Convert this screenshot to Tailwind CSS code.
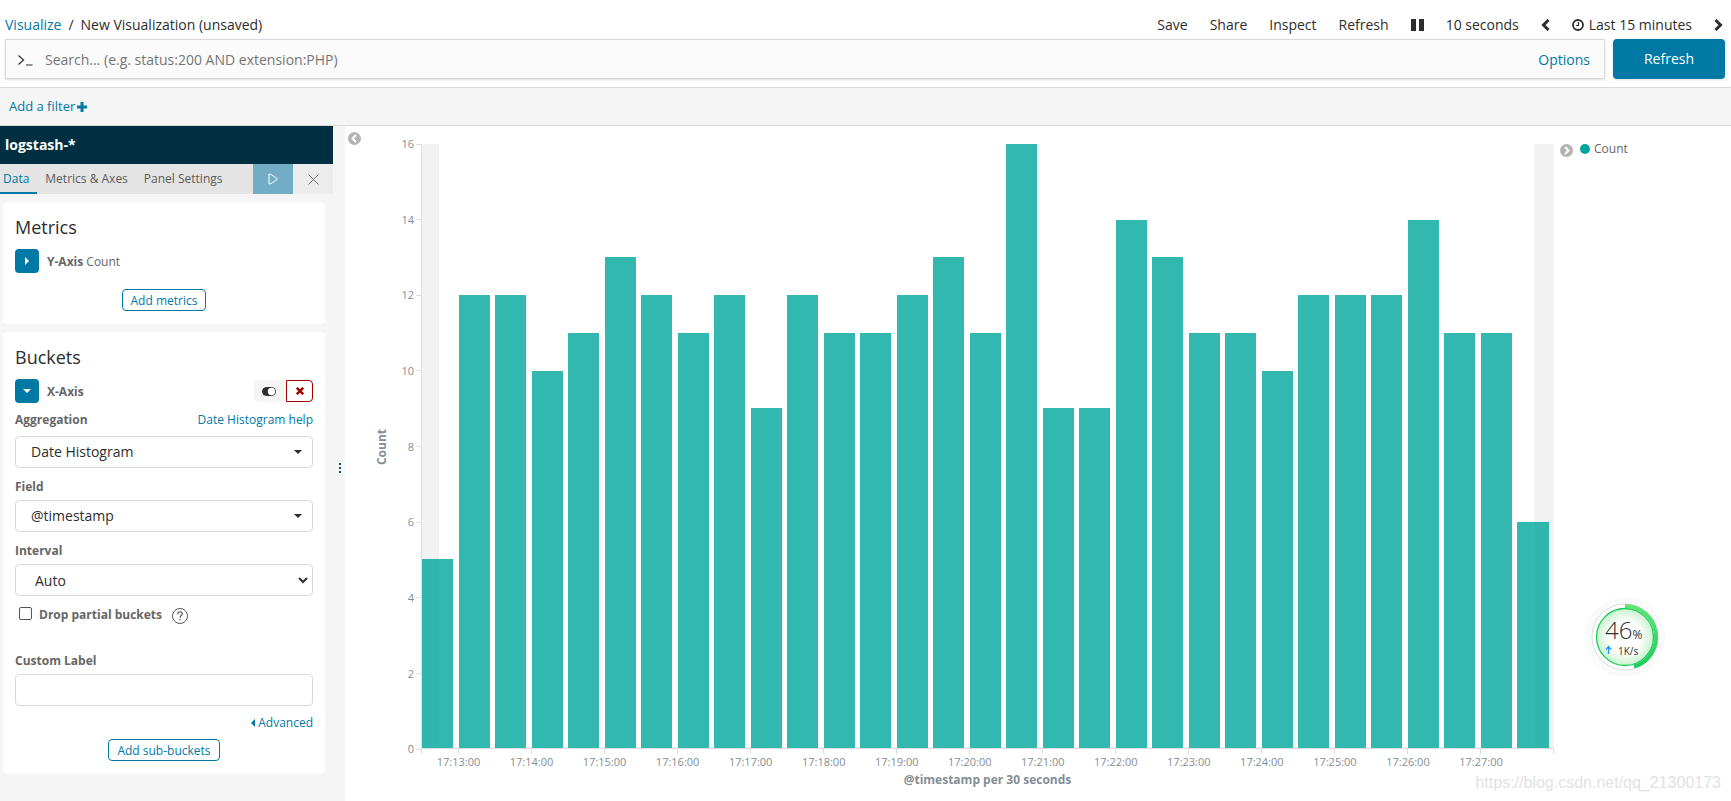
<!DOCTYPE html>
<html lang="en">
<head>
<meta charset="utf-8">
<title>New Visualization - Kibana</title>
<script src="https://cdn.jsdelivr.net/npm/@tailwindcss/browser@4"></script>
</head>
<body class="min-h-screen flex flex-col bg-white text-[#2d2d2d] text-sm font-['Open_Sans','Noto_Sans',sans-serif] relative">

<header class="pt-[11px] pb-2">
  <div class="flex items-center justify-between h-7 pl-[5px] pr-2">
    <nav aria-label="Breadcrumb" class="flex gap-[7px]">
      <a href="#" class="text-[#0079a5]">Visualize</a><span>/</span><span>New Visualization (unsaved)</span>
    </nav>
    <nav aria-label="Actions" class="flex items-center gap-[22px]">
      <button>Save</button>
      <button>Share</button>
      <button>Inspect</button>
      <button>Refresh</button>
      <button aria-label="Pause"><svg class="block w-[13px] h-3" viewBox="0 0 13 12" fill="currentColor"><path d="M0 0h5v12H0zM8 0h5v12H8z"/></svg></button>
      <button>10 seconds</button>
      <button aria-label="Previous"><svg class="block w-[9px] h-3" viewBox="0 0 9 12" fill="none" stroke="currentColor" stroke-width="3"><path d="M7.500 1 2.500 6l5 5"/></svg></button>
      <button class="flex items-center gap-[5px]"><svg class="w-3 h-3" viewBox="0 0 12 12" fill="none" stroke="currentColor"><circle cx="6" cy="6" r="5" stroke-width="1.800"/><path d="M6.500 3v3.500H4" stroke-width="1.200"/></svg>Last 15 minutes</button>
      <button aria-label="Next"><svg class="block w-[9px] h-3" viewBox="0 0 9 12" fill="none" stroke="currentColor" stroke-width="3"><path d="m1.500 1 5 5-5 5"/></svg></button>
    </nav>
  </div>
  <form class="flex gap-2 pl-[5px] pr-[6px] h-10">
    <div class="flex-1 flex items-center border border-[#d9d9d9] bg-[#fbfbfb] shadow-sm pt-[2px] pl-3 pr-[14px]">
      <svg class="w-[15px] h-3 mr-3" viewBox="0 0 15 12" fill="none" stroke="currentColor" stroke-width="1.200"><path d="m.5 1.500 5 4.500-5 4.500M8 11h6.500"/></svg>
      <input aria-label="Search" placeholder="Search... (e.g. status:200 AND extension:PHP)" class="flex-1 bg-transparent outline-none placeholder:text-[#757575]">
      <a href="#" class="text-[#0079a5]">Options</a>
    </div>
    <button type="button" class="w-28 rounded bg-[#0079a5] text-white shadow-sm">Refresh</button>
  </form>
</header>

<div class="h-[39px] border-y border-[#d9d9d9] bg-[#f5f5f5] flex items-center px-[9px]">
  <button class="flex items-center gap-[2px] text-[13px] text-[#0079a5]">Add a filter<svg class="w-[10px] h-[10px]" viewBox="0 0 10 10" fill="currentColor"><path d="M3.500 0h3v3.500H10v3H6.500V10h-3V6.500H0v-3h3.500z"/></svg></button>
</div>

<main class="flex-1 flex">
  <div class="w-[345px] shrink-0 bg-[#f5f5f5] flex">
    <aside class="w-[333px]">
      <h1 class="h-[38px] px-[5px] flex items-center bg-[#002f42] text-white font-bold">logstash-*</h1>
      <div class="flex h-[30px] bg-[#e4e4e4] text-xs text-[#5a5a5a]">
        <button class="pl-[3px] pr-2 pt-[2px] border-b-2 border-[#0079a5] text-[#0079a5]">Data</button>
        <button class="px-2 pt-[2px]  border-b-2 border-transparent">Metrics &amp; Axes</button>
        <button class="px-2 pt-[2px]  border-b-2 border-transparent">Panel Settings</button>
        <button aria-label="Apply changes" class="ml-auto w-10 bg-[#73adc5] flex items-center justify-center"><svg class="w-[10px] h-3" viewBox="0 0 10 12" fill="none" stroke="#fff"><path d="M1 1v10l2-.5 6-4V5.500l-6-4z"/></svg></button>
        <button aria-label="Discard changes" class="w-10 bg-[#ececec] flex items-center justify-center"><svg class="w-[11px] h-[11px]" viewBox="0 0 11 11" stroke="#777"><path d="m.5.5 10 10m0-10-10 10"/></svg></button>
      </div>

      <div class="pt-2 pl-[3px] pr-2 flex flex-col gap-2">
        <section class="bg-white rounded px-3 pt-[9px] pb-[13px]">
          <h2 class="text-lg leading-8">Metrics</h2>
          <div class="mt-[6px] flex items-center text-xs text-[#666]">
            <button aria-label="Expand Y-Axis" class="w-6 h-6 rounded bg-[#0079a5] flex items-center justify-center mr-2"><svg class="w-1 h-2" viewBox="0 0 4 8" fill="#fff"><path d="M0 0v8l4-4z"/></svg></button>
            <span class="pt-px"><b>Y-Axis</b> Count</span>
          </div>
          <div class="mt-4 flex justify-center"><button class="h-[22px] px-2 pt-px border border-[#0079a5] rounded text-xs text-[#0079a5]">Add metrics</button></div>
        </section>

        <section class="bg-white rounded px-3 pt-[9px] pb-[13px] text-xs text-[#666]">
          <h2 class="text-lg leading-8 text-[#2d2d2d]">Buckets</h2>
          <div class="mt-[6px] flex items-center">
            <button aria-label="Collapse X-Axis" class="w-6 h-6 rounded bg-[#0079a5] flex items-center justify-center mr-2"><svg class="w-2 h-1" viewBox="0 0 8 4" fill="#fff"><path d="M0 0h8L4 4z"/></svg></button>
            <b class="pt-px">X-Axis</b>
            <button aria-label="Disable aggregation" class="ml-auto w-[30px] h-[22px] rounded-l bg-[#f5f5f5] flex items-center justify-center"><svg class="w-[14px] h-[9px]" viewBox="0 0 14 9"><rect x=".5" y=".5" width="13" height="8" rx="4" fill="#2d2d2d" stroke="#2d2d2d"/><circle cx="9.500" cy="4.500" r="3.700" fill="#fff"/></svg></button>
            <button aria-label="Remove aggregation" class="ml-[2px] w-[27px] h-[22px] rounded-r border border-[#a30000] flex items-center justify-center"><svg class="w-2 h-2" viewBox="0 0 8 8" stroke="#a30000" stroke-width="2.400"><path d="m.8.8 6.400 6.400m0-6.400L.8 7.200"/></svg></button>
          </div>

          <div class="mt-[7px] flex justify-between leading-5"><label for="agg" class="font-bold">Aggregation</label><a href="#" class="text-[#0079a5]">Date Histogram help</a></div>
          <div class="relative mt-[6px]">
            <select id="agg" class="appearance-none block w-full h-8 border border-[#d9d9d9] rounded bg-white px-[15px] text-sm text-[#2d2d2d]"><option>Date Histogram</option></select>
            <svg class="pointer-events-none absolute right-[11px] top-[14px] w-2 h-1" viewBox="0 0 8 4" fill="#2d2d2d"><path d="M0 0h8L4 4z"/></svg>
          </div>

          <label for="field" class="block mt-[9px] leading-5 font-bold">Field</label>
          <div class="relative mt-[3px]">
            <select id="field" class="appearance-none block w-full h-8 border border-[#d9d9d9] rounded bg-white px-[15px] text-sm text-[#2d2d2d]"><option>@timestamp</option></select>
            <svg class="pointer-events-none absolute right-[11px] top-[14px] w-2 h-1" viewBox="0 0 8 4" fill="#2d2d2d"><path d="M0 0h8L4 4z"/></svg>
          </div>

          <label for="interval" class="block mt-[9px] leading-5 font-bold">Interval</label>
          <div class="relative mt-[3px]">
            <select id="interval" class="appearance-none block w-full h-8 border border-[#d9d9d9] rounded bg-white px-[19px] pt-px text-sm text-[#2d2d2d]"><option>Auto</option></select>
            <svg class="pointer-events-none absolute right-[5px] top-[13px] w-[10px] h-[7px]" viewBox="0 0 10 7" fill="none" stroke="#2d2d2d" stroke-width="2"><path d="m1 1 4 4 4-4"/></svg>
          </div>

          <div class="mt-[7px] flex items-center h-6">
            <input id="drop" type="checkbox" class="appearance-none w-[13px] h-[13px] border border-[#555] rounded-[2px] ml-1 mr-[7px] mb-1">
            <label for="drop" class="font-bold">Drop partial buckets</label>
            <svg class="w-4 h-4 ml-[10px] mt-[2px]" viewBox="0 0 16 16" fill="none" stroke="#555"><circle cx="8" cy="8" r="7.500"/><path d="M5.700 6.200C5.700 3 10.300 3 10.300 5.800 10.300 7.500 8 7.700 8 9.800M8 11v1.300" stroke-width="1.200"/></svg>
          </div>

          <label for="custom" class="block mt-6 leading-5 font-bold">Custom Label</label>
          <input id="custom" type="text" class="mt-[3px] block w-full h-8 border border-[#d9d9d9] rounded px-[15px]">
          <div class="mt-[7px] flex justify-end leading-5"><button class="flex items-center gap-[3px] text-[#0079a5]"><svg class="w-1 h-2" viewBox="0 0 4 8" fill="currentColor"><path d="M4 0v8L0 4z"/></svg>Advanced</button></div>
          <div class="mt-[6px] flex justify-center"><button class="h-[22px] px-2 pt-px border border-[#0079a5] rounded text-xs text-[#0079a5]">Add sub-buckets</button></div>
        </section>
      </div>
    </aside>
    <div class="flex-1 flex items-center justify-center pt-2 pl-[2px]"><svg class="w-[2px] h-[10px]" viewBox="0 0 2 10" fill="#0a4f6b"><path d="M0 0h2v2H0zM0 4h2v2H0zM0 8h2v2H0z"/></svg></div>
  </div>

  <div class="flex-1 flex">
    <button aria-label="Collapse editor" class="self-start mt-[6px] ml-[3px]"><svg class="block w-[13px] h-[13px]" viewBox="0 0 13 13" fill="none"><circle cx="6.500" cy="6.500" r="6.500" fill="#b3b3b3"/><path d="M8 3 4.500 6.500 8 10" stroke="#fff" stroke-width="2"/></svg></button>

    <figure class="flex-1 flex flex-col pt-[18px] text-[11px] text-[#848e96]">
      <div class="flex-1 flex">
        <div class="w-[42px] flex items-center justify-center"><span class="-rotate-90 font-bold text-xs">Count</span></div>
        <div id="yaxis" class="w-[18px] flex flex-col justify-between"></div>
        <div id="plot" class="flex-1 relative border-l border-b border-[#ddd] grid grid-cols-31 items-end">
          <div class="absolute inset-y-0 left-0 w-[17px] bg-[#f2f2f2]"></div>
          <div class="absolute inset-y-0 right-0 w-5 bg-[#f2f2f2]"></div>
        </div>
      </div>
      <div class="ml-[60px] relative h-[22px]">
        <div class="absolute inset-x-0 top-0 h-[5px] border-x border-[#ddd]"></div>
        <div id="xaxis" class="grid grid-cols-31 pl-px"></div>
      </div>
      <figcaption class="ml-[60px] h-[30px] text-center text-xs leading-[18px] font-bold">@timestamp per 30 seconds</figcaption>
    </figure>

    <div class="w-[177px] pt-[18px] pl-[6px] flex items-start text-xs text-[#666]">
      <button aria-label="Collapse legend"><svg class="block w-[13px] h-[13px]" viewBox="0 0 13 13" fill="none"><circle cx="6.500" cy="6.500" r="6.500" fill="#b3b3b3"/><path d="M5 3l3.500 3.500L5 10" stroke="#fff" stroke-width="2"/></svg></button>
      <button class="ml-[7px] flex items-center gap-1 leading-[10px]"><i class="w-[10px] h-[10px] rounded-full bg-[#00a69b]"></i>Count</button>
    </div>
  </div>
</main>

<!-- Floating system monitor -->
<div class="absolute left-[1584px] top-[596px] w-[82px] h-[82px]">
  <svg class="absolute inset-0" viewBox="0 0 82 82" fill="none">
    <defs>
      <radialGradient id="glow"><stop offset=".55" stop-color="#fff"/><stop offset="1" stop-color="#c9f2cf"/></radialGradient>
      <linearGradient id="ring" x1="0" y1="0" x2="0" y2="1"><stop offset="0" stop-color="#5fe673"/><stop offset="1" stop-color="#18cf5c"/></linearGradient>
    </defs>
    <circle cx="41" cy="41" r="40" fill="#fafafa"/>
    <circle cx="41" cy="41" r="33" fill="#fff" stroke="#ddd"/>
    <circle cx="41" cy="41" r="28.500" fill="url(#glow)" stroke="#20c95c" stroke-width="1.300"/>
    <path d="M41 10A31 31 0 0 1 50 70.700" stroke="url(#ring)" stroke-width="4"/>
    <path d="M24.500 58v-7m-2.500 2.500 2.500-3 2.500 3" stroke="#1e90ff" stroke-width="1.300"/>
  </svg>
  <div class="relative pt-[22px] pl-[21px] text-[#333]">
    <div class="flex items-baseline font-light text-2xl leading-6">46<span class="text-xs font-normal">%</span></div>
    <div class="pl-[13px] text-[10px] leading-4">1K/s</div>
  </div>
</div>
<div class="absolute right-[10px] bottom-2 text-base leading-5 text-[#e2e2e2] font-['Liberation_Sans',sans-serif]">https://blog.csdn.net/qq_21300173</div>

<script>
const counts = [5,12,12,10,11,13,12,11,12,9,12,11,11,12,13,11,16,9,9,14,13,11,11,10,12,12,12,14,11,11,6];
const plot = document.getElementById('plot');
plot.insertAdjacentHTML('beforeend', counts.map(n =>
  `<div class="relative h-full flex items-end"><div class="w-[85%] bg-[#00a69b]/80" style="height:${n / 16 * 100}%"></div></div>`).join(''));
document.getElementById('yaxis').innerHTML = [16,14,12,10,8,6,4,2,0].map(n =>
  `<div class="h-0 flex items-center justify-end gap-[2px]">${n}<i class="w-[5px] shrink-0 h-px bg-[#ddd]"></i></div>`).join('');
document.getElementById('xaxis').innerHTML = counts.map((n, i) => i % 2
  ? `<div class="flex flex-col items-center w-0"><i class="w-px h-[5px] bg-[#ddd]"></i><span class="leading-4">17:${13 + (i - 1) / 2}:00</span></div>`
  : '<div></div>').join('');
</script>
</body>
</html>
